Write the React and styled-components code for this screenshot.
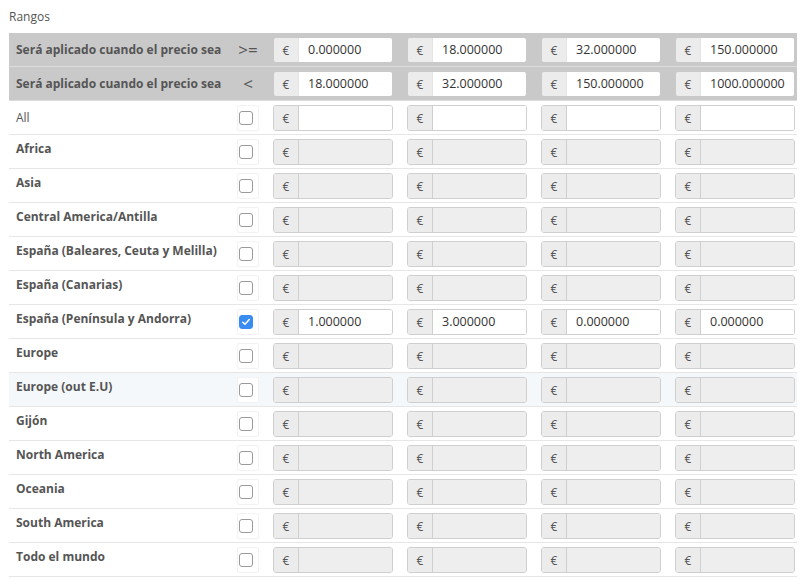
import React from 'react'
import styled, { createGlobalStyle } from 'styled-components'

const GlobalStyle = createGlobalStyle`
  body {
    margin: 0;
    background: #fff;
    font-family: "Open Sans", "Liberation Sans", sans-serif;
    font-size: 12px;
    color: #555;
  }
`

const Page = styled.div`
  padding: 7px 7px 0 9px;
`

const Title = styled.div`
  font-size: 12px;
  line-height: 20px;
  color: #555;
  margin-bottom: 6px;
`

const Table = styled.div`
  width: 788px;
`

const Row = styled.div`
  display: grid;
  grid-template-columns: 207px 22px repeat(4, 120px);
  column-gap: 14px;
  align-items: start;
  padding: 4px 2px 3px 7px;
  height: 34px;
  box-sizing: border-box;
  border-bottom: 1px solid ${p => (p.$head ? '#dcdcdc' : '#e6e6e6')};
  background: ${p => (p.$head ? '#c9c9c9' : p.$hover ? '#f5f8fb' : '#fff')};
`

const Label = styled.div`
  font-weight: ${p => (p.$plain ? 400 : 700)};
  line-height: 18px;
  color: #555;
  white-space: nowrap;
  padding-top: ${p => (p.$head || p.$plain ? '4px' : '1px')};
`

const Operator = styled.div`
  font-size: 17px;
  line-height: 26px;
  color: #555;
  text-align: center;
  margin-left: -6px;
  margin-right: -6px;
`

const CheckWrap = styled.div`
  width: 22px;
  height: 26px;
  box-sizing: border-box;
  border: 1px solid #f2f2f2;
  border-radius: 2px;
  background: #fff;
  display: flex;
  align-items: center;
  padding-left: 1px;
`

const Check = styled.span`
  width: 14px;
  height: 14px;
  box-sizing: border-box;
  border-radius: 3px;
  border: 1px solid ${p => (p.$on ? '#3b8cf0' : '#9a9a9a')};
  background: ${p => (p.$on ? '#3b8cf0' : '#fff')};
  display: flex;
  align-items: center;
  justify-content: center;
`

const Group = styled.div`
  display: flex;
  height: 26px;
  box-sizing: border-box;
  border: 1px solid ${p => (p.$head ? '#c9c9c9' : '#cfcfcf')};
  border-radius: 3px;
  overflow: hidden;
`

const Addon = styled.div`
  width: 24px;
  flex: none;
  background: #ececec;
  border-right: 1px solid ${p => (p.$head ? '#e4e4e4' : '#cfcfcf')};
  display: flex;
  align-items: center;
  justify-content: center;
  color: #555;
  font-size: 12px;
`

const Field = styled.div`
  flex: 1;
  background: ${p => (p.$disabled ? '#eeeeee' : '#fff')};
  color: #333;
  font-size: 12.5px;
  line-height: 24px;
  padding-left: 9px;
`

const fromRow = ['0.000000', '18.000000', '32.000000', '150.000000']
const toRow = ['18.000000', '32.000000', '150.000000', '1000.000000']

const zones = [
  { name: 'All', plain: true, enabled: true },
  { name: 'Africa' },
  { name: 'Asia' },
  { name: 'Central America/Antilla' },
  { name: 'España (Baleares, Ceuta y Melilla)' },
  { name: 'España (Canarias)' },
  { name: 'España (Península y Andorra)', checked: true, values: ['1.000000', '3.000000', '0.000000', '0.000000'] },
  { name: 'Europe' },
  { name: 'Europe (out E.U)', hover: true },
  { name: 'Gijón' },
  { name: 'North America' },
  { name: 'Oceania' },
  { name: 'South America' },
  { name: 'Todo el mundo' },
]

const PriceInput = ({ value, disabled, head }) => (
  <Group $head={head}>
    <Addon $head={head}>€</Addon>
    <Field $disabled={disabled}>{value}</Field>
  </Group>
)

const HeadRow = ({ op, values }) => (
  <Row $head>
    <Label $head>Será aplicado cuando el precio sea</Label>
    <Operator>{op}</Operator>
    {values.map((v, i) => (
      <PriceInput key={i} value={v} head />
    ))}
  </Row>
)

export default function App() {
  return (
    <Page>
      <GlobalStyle />
      <Title>Rangos</Title>
      <Table>
        <HeadRow op=">=" values={fromRow} />
        <HeadRow op="<" values={toRow} />
        {zones.map(z => {
          const active = z.enabled || z.checked
          return (
            <Row key={z.name} $hover={z.hover}>
              <Label $plain={z.plain}>{z.name}</Label>
              <CheckWrap>
                <Check $on={z.checked}>
                  {z.checked && (
                    <svg width="10" height="10" viewBox="0 0 10 10">
                      <path d="M1.8 5.2 L4 7.3 L8.3 2.6" fill="none" stroke="#fff" strokeWidth="1.5" strokeLinecap="round" strokeLinejoin="round" />
                    </svg>
                  )}
                </Check>
              </CheckWrap>
              {[0, 1, 2, 3].map(i => (
                <PriceInput key={i} value={z.values ? z.values[i] : ''} disabled={!active} />
              ))}
            </Row>
          )
        })}
      </Table>
    </Page>
  )
}
